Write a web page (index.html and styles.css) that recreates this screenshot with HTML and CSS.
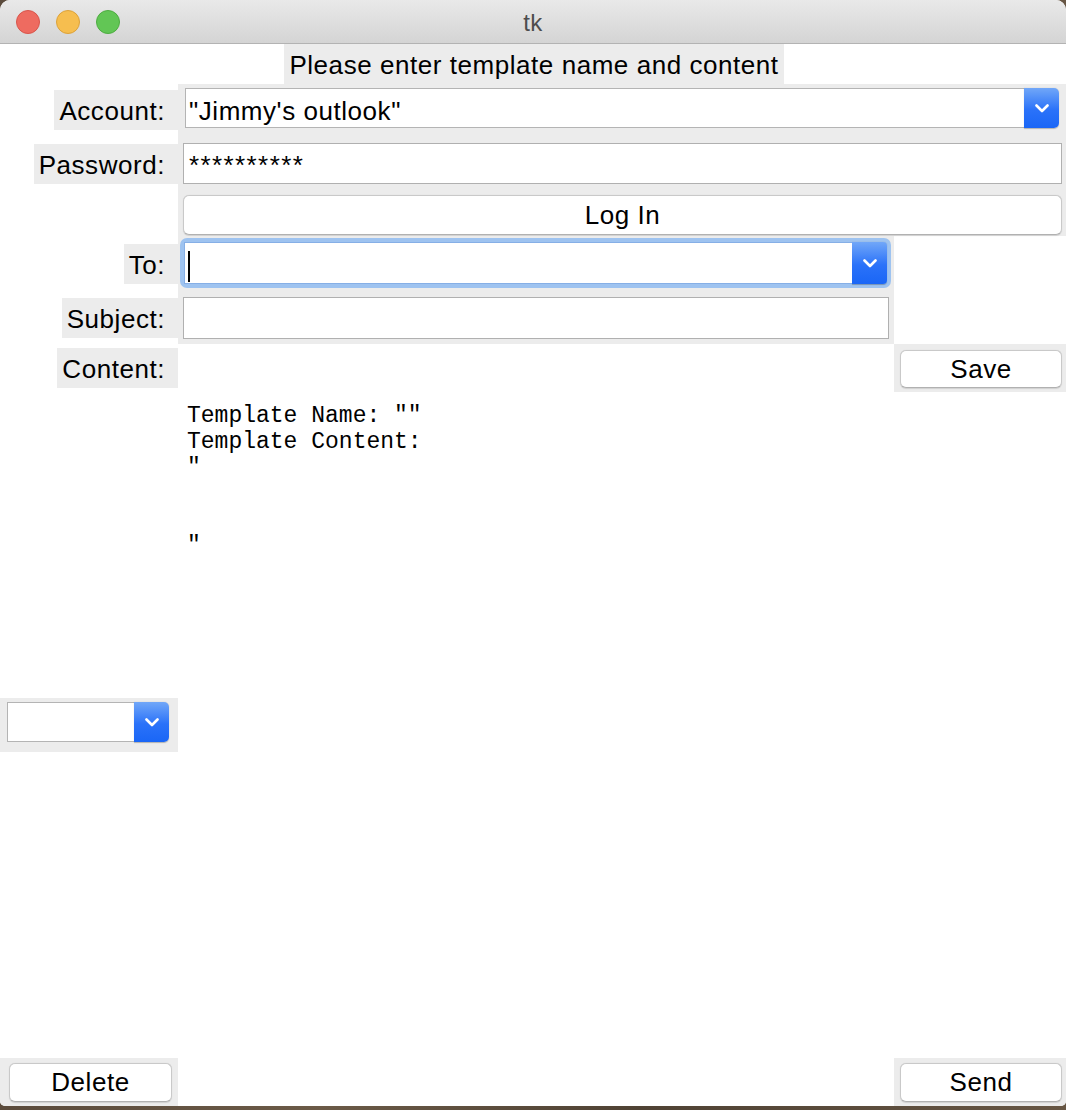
FILE: index.html
```html
<!DOCTYPE html>
<html>
<head>
<meta charset="utf-8">
<link rel="stylesheet" href="styles.css">
</head>
<body>
<div class="window">
  <div class="titlebar">
    <div class="lights">
      <span class="light red"></span>
      <span class="light yellow"></span>
      <span class="light green"></span>
    </div>
    <div class="title">tk</div>
  </div>
  <div class="content">
    <div class="header">Please enter template name and content</div>

    <div class="label l-account">Account:</div>
    <div class="cell c-account">
      <div class="combo">
        <div class="combo-entry">"Jimmy's outlook"</div>
        <div class="combo-btn"><svg width="14" height="9" viewBox="0 0 14 9"><path d="M1.5 1.5 L7 7 L12.5 1.5" fill="none" stroke="#fff" stroke-width="2.6" stroke-linecap="round" stroke-linejoin="round"/></svg></div>
      </div>
    </div>

    <div class="label l-password">Password:</div>
    <div class="cell c-password">
      <div class="entry pw">**********</div>
    </div>

    <div class="cell c-login">
      <div class="button login">Log In</div>
    </div>

    <div class="label l-to">To:</div>
    <div class="cell c-to">
      <div class="focus-ring">
        <div class="combo focused">
          <div class="combo-entry"><span class="caret"></span></div>
          <div class="combo-btn"><svg width="14" height="9" viewBox="0 0 14 9"><path d="M1.5 1.5 L7 7 L12.5 1.5" fill="none" stroke="#fff" stroke-width="2.6" stroke-linecap="round" stroke-linejoin="round"/></svg></div>
        </div>
      </div>
    </div>

    <div class="label l-subject">Subject:</div>
    <div class="cell c-subject">
      <div class="entry subject"></div>
    </div>

    <div class="label l-content">Content:</div>
    <div class="cell c-save">
      <div class="button save">Save</div>
    </div>

    <pre class="textarea">Template Name: ""
Template Content:
"


"</pre>

    <div class="cell c-small">
      <div class="combo small">
        <div class="combo-entry"></div>
        <div class="combo-btn"><svg width="14" height="9" viewBox="0 0 14 9"><path d="M1.5 1.5 L7 7 L12.5 1.5" fill="none" stroke="#fff" stroke-width="2.6" stroke-linecap="round" stroke-linejoin="round"/></svg></div>
      </div>
    </div>

    <div class="cell c-delete">
      <div class="button delete">Delete</div>
    </div>
    <div class="cell c-send">
      <div class="button send">Send</div>
    </div>
  </div>
</div>
</body>
</html>
```

FILE: styles.css
```css
* { box-sizing: border-box; }

html, body {
  margin: 0;
  padding: 0;
}

body {
  width: 1066px;
  height: 1110px;
  overflow: hidden;
  background: linear-gradient(90deg, #5b4b3c, #6b5a47 30%, #4f4234 60%, #675644);
  font-family: "Liberation Sans", Arial, sans-serif;
  color: #000;
}

.window {
  width: 1066px;
  height: 1106px;
  background: #fff;
  border-radius: 10px 10px 5px 5px;
  overflow: hidden;
}

.titlebar {
  height: 44px;
  background: linear-gradient(#e9e9e9, #d4d4d4);
  border-bottom: 1px solid #b3b3b3;
  display: flex;
  align-items: center;
  position: relative;
}

.lights {
  display: flex;
  gap: 16px;
  padding-left: 16px;
  margin-top: 1px;
}

.light {
  width: 24px;
  height: 24px;
  border-radius: 50%;
  display: block;
}
.red { background: #ee6b60; border: 1px solid #d8554b; }
.yellow { background: #f6be4f; border: 1px solid #dca23a; }
.green { background: #62c655; border: 1px solid #4eac41; }

.title {
  position: absolute;
  left: 0;
  right: 0;
  top: 0;
  text-align: center;
  font-size: 24px;
  line-height: 43px;
  padding-top: 1px;
  color: #4d4d4d;
  letter-spacing: 0.5px;
  font-family: "Liberation Sans", Arial, sans-serif;
}

.content {
  display: grid;
  grid-template-columns: 178px 716px 172px;
  grid-template-rows: 40px 54px 52px 46px 56px 52px 48px 306px 54px 1fr 48px;
  height: 1062px;
  font-size: 26px;
  letter-spacing: 0.55px;
}

.header {
  grid-row: 1;
  grid-column: 1 / -1;
  justify-self: center;
  width: 500px;
  margin-left: 2px;
  background: #ececec;
  line-height: 40px;
  padding-top: 1px;
  text-align: center;
}

.label {
  grid-column: 1;
  justify-self: end;
  align-self: start;
  height: 40px;
  line-height: 40px;
  padding: 1px 13px 0 5px;
  background: #ececec;
}
.l-account { grid-row: 2; margin-top: 6px; }
.l-password { grid-row: 3; margin-top: 6px; }
.l-to { grid-row: 5; margin-top: 8px; }
.l-subject { grid-row: 6; margin-top: 6px; }
.l-content { grid-row: 7; margin-top: 4px; }

.cell { background: #ececec; }

.c-account { grid-row: 2; grid-column: 2 / 4; padding: 4px 7px 0 7px; }
.c-password { grid-row: 3; grid-column: 2 / 4; padding: 5px 4px 0 5px; }
.c-login { grid-row: 4; grid-column: 2 / 4; padding: 5px 4px 0 5px; }
.c-to { grid-row: 5; grid-column: 2; padding: 2px 3px 0 2px; }
.c-subject { grid-row: 6; grid-column: 2; padding: 5px 5px 0 5px; }
.c-save { grid-row: 7; grid-column: 3; padding: 6px 4px 0 6px; }
.c-small { grid-row: 9; grid-column: 1; padding: 4px 9px 0 7px; }
.c-delete { grid-row: 11; grid-column: 1; padding: 5px 6px 0 9px; }
.c-send { grid-row: 11; grid-column: 3; padding: 5px 4px 0 6px; }

.combo {
  display: flex;
  height: 40px;
}
.combo-entry {
  flex: 1;
  background: #fff;
  border: 1px solid #b4b4b4;
  border-right: none;
  line-height: 38px;
  padding-top: 3px;
  padding-left: 3px;
  white-space: nowrap;
  overflow: hidden;
}
.combo-btn {
  width: 35px;
  background: linear-gradient(#71a7f8, #2a72f9 55%, #1a66f6);
  border-radius: 0 5px 5px 0;
  display: flex;
  align-items: center;
  justify-content: center;
  box-shadow: 0 0.5px 1px rgba(0,0,0,0.25);
}
.combo-btn svg { display: block; margin-top: 1px; }

.focus-ring {
  height: 50px;
  padding: 4px;
  background: #9ec3f0;
  border-radius: 7px;
}
.combo.focused { height: 42px; }
.combo.focused .combo-entry {
  border-color: #86afe6;
  position: relative;
}
.combo.focused .combo-btn { border-radius: 0 4px 4px 0; }
.caret {
  position: absolute;
  left: 3px;
  top: 8px;
  width: 2px;
  height: 31px;
  background: #000;
}

.combo.small { height: 40px; }

.entry {
  background: #fff;
  border: 1px solid #b0b0b0;
  line-height: 39px;
  padding-left: 5px;
}
.pw {
  height: 41px;
  padding-top: 2px;
  letter-spacing: 1.4px;
}
.subject { height: 42px; }

.button {
  background: #fff;
  border: 1px solid #c9c9c9;
  border-bottom-color: #b1b1b1;
  border-radius: 6px;
  text-align: center;
  box-shadow: 0 0.5px 1px rgba(0,0,0,0.12);
}
.login { height: 40px; line-height: 38px; }
.save { height: 38px; line-height: 36px; }
.delete, .send { height: 39px; line-height: 37px; }

.textarea {
  grid-row: 8;
  grid-column: 2 / 4;
  margin: 0;
  padding: 11px 0 0 9px;
  font-family: "Liberation Mono", "DejaVu Sans Mono", monospace;
  font-size: 23px;
  line-height: 26px;
  letter-spacing: 0;
  color: #000;
  background: #fff;
}
```
